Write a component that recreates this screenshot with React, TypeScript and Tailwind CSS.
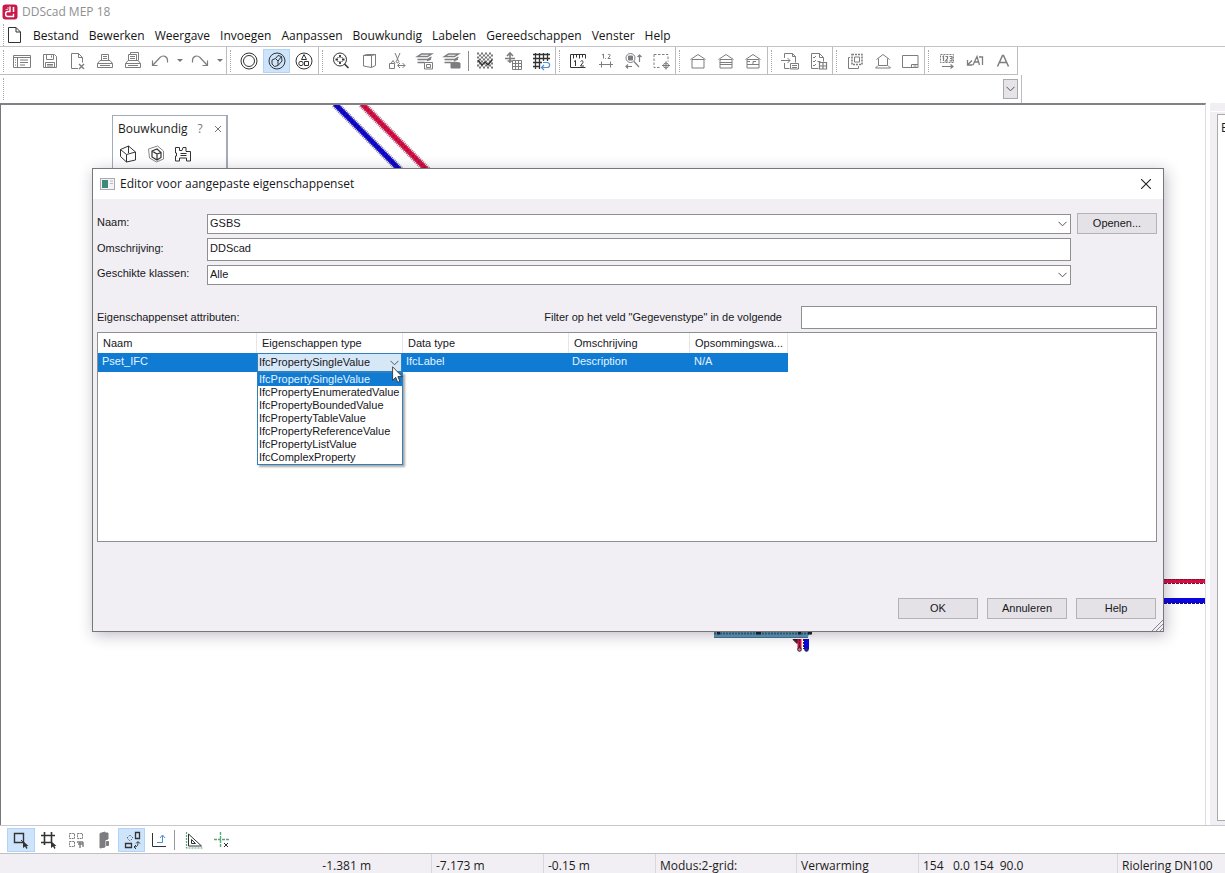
import type { ReactNode } from "react";

const UI = "font-['Open_Sans','Noto_Sans',sans-serif]";
const ARIAL = "font-['Liberation_Sans',Arial,sans-serif]";

function Glyph({ children }: { children: ReactNode }) {
  return (
    <svg width="20" height="20" viewBox="0 0 20 20" fill="none" stroke="currentColor" strokeWidth="1" aria-hidden="true" className="shrink-0">
      {children}
    </svg>
  );
}

function Chevron() {
  return (
    <svg width="9" height="6" viewBox="0 0 9 6" fill="none" stroke="#555" strokeWidth="1" aria-hidden="true">
      <path d="M.5 .8l4 4 4-4" />
    </svg>
  );
}

function Tool({ label, active, dark, children }: { label: string; active?: boolean; dark?: boolean; children: ReactNode }) {
  return (
    <button
      type="button"
      aria-label={label}
      className={`flex h-6 min-w-0 flex-1 items-center justify-center ${active ? "bg-[#cde4fb] outline outline-1 -outline-offset-1 outline-[#b3d5f5]" : ""} ${dark ? "text-[#333]" : "text-[#7d7d80]"}`}
    >
      <Glyph>{children}</Glyph>
    </button>
  );
}

function Caret({ label }: { label: string }) {
  return (
    <button type="button" aria-label={label} className="flex h-6 w-3 shrink-0 items-center justify-center text-[#777]">
      <svg width="6" height="3" viewBox="0 0 6 3" aria-hidden="true">
        <path d="M0 0h6l-3 3z" fill="currentColor" />
      </svg>
    </button>
  );
}

function Grip() {
  return <span className="mr-1 ml-[3px] h-[22px] w-0 shrink-0 border-l border-dotted border-[#a9a9ad]" />;
}

function Group({ className, children }: { className: string; children: ReactNode }) {
  return (
    <div role="group" className={`flex h-full shrink-0 items-center border-r border-b border-[#bdbcc0] ${className}`}>
      <Grip />
      {children}
    </div>
  );
}

const menus = ["Bestand", "Bewerken", "Weergave", "Invoegen", "Aanpassen", "Bouwkundig", "Labelen", "Gereedschappen", "Venster", "Help"];

const propertyTypes = [
  "IfcPropertySingleValue",
  "IfcPropertyEnumeratedValue",
  "IfcPropertyBoundedValue",
  "IfcPropertyTableValue",
  "IfcPropertyReferenceValue",
  "IfcPropertyListValue",
  "IfcComplexProperty",
];

function TitleBar() {
  return (
    <header className="flex h-6 items-center gap-1 pl-[2px] text-[12px] text-[#8f8f91]">
      <svg width="16" height="16" viewBox="0 0 16 16" aria-hidden="true">
        <rect x=".5" y=".5" width="15" height="15" rx="3" fill="#c9194b" />
        <path d="M8 2.500v5H5.500c-2.500 0-2.500 5 0 5h6V9.800" fill="none" stroke="#fff" strokeWidth="1.400" />
        <path d="M11.500 3v5" fill="none" stroke="#fff" strokeWidth="1.600" />
        <path d="M6 3v2.500H3.500" fill="none" stroke="#f3b5c5" strokeWidth="1" />
      </svg>
      <span>DDScad MEP 18</span>
    </header>
  );
}

function MenuBar() {
  return (
    <nav className="flex h-[23px] items-center border-b border-[#c4c3c7] text-[12px] text-[#151515]">
      <Grip />
      <svg width="13" height="16" viewBox="0 0 13 16" fill="none" stroke="#333" className="mr-3" aria-hidden="true">
        <path d="M.5 .5h7.500l4.500 4.500v10.500H.5zM8 .5V5h4.500" />
      </svg>
      <div className="flex gap-[10px] pt-[2px]">
        {menus.map((m) => (
          <button type="button" key={m}>{m}</button>
        ))}
      </div>
    </nav>
  );
}

const house = "M2.500 8.500L10 3.500l7.500 5M4 8.500h12v8.500H4z";

function Toolbar() {
  return (
    <div role="toolbar" aria-label="Werkbalk" className="flex h-7">
      <Group className="w-[227px]">
        <Tool label="Project">
          <path d="M1.500 4.500h17v12h-17zM1.500 6.500h17M5.500 6.500v10M8 9h8M8 11.500h8M8 14h5M3 9h1M3 11.500h1M3 14h1" />
        </Tool>
        <Tool label="Opslaan">
          <path d="M3.500 3.500h11l2 2v11h-13zM6.500 3.500v5h7v-5M11.500 4.500v2M5.500 16.500v-5h9v5M7 13.500h6M7 15h6" />
        </Tool>
        <Tool label="Sluiten">
          <path d="M11 17.500H4.500v-15h7l4 4v5M11.500 2.500v4h4" />
          <path d="M12 13l5 5M17 13l-5 5" strokeWidth="1.400" />
        </Tool>
        <Tool label="Afdrukken">
          <path d="M6.500 9.500v-6h7v6M5 9.500h10l2.500 3v4h-15v-4zM2.500 12.500h15M5 14.500h10M8 5.500h4M8 7.500h4" />
        </Tool>
        <Tool label="Afdrukvoorbeeld">
          <path d="M5.500 9.500v-6h8v6M7.500 3.500v-2h8v8M5 9.500h10l2.500 3v4h-15v-4zM2.500 12.500h15M5 14.500h10M7 5.500h5M7 7.500h5" />
        </Tool>
        <Tool label="Ongedaan maken">
          <path d="M2.500 14.500L10 6.500c3-3 7.500-1 7.500 3v2M2.500 9.500v5h5" strokeWidth="1.200" />
        </Tool>
        <Caret label="Meer ongedaan maken" />
        <Tool label="Opnieuw">
          <path d="M17.500 14.500L10 6.500c-3-3-7.500-1-7.500 3v2M17.500 9.500v5h-5" strokeWidth="1.200" />
        </Tool>
        <Caret label="Meer opnieuw" />
      </Group>
      <Group className="w-[92px]">
        <Tool label="Cirkel" dark>
          <circle cx="10" cy="10" r="8" />
          <circle cx="10" cy="10" r="5.500" />
        </Tool>
        <Tool label="Kubus" dark active>
          <circle cx="10" cy="10" r="8" />
          <path d="M5 9l3.500-1.500L11 10v4.500l-3.500 1L5 13zM8.500 7.500L11 4.500l3.500 1L15 10l-4 4.500M11 10l3.500-4.500" />
        </Tool>
        <Tool label="Vormen" dark>
          <circle cx="10" cy="10" r="8" />
          <path d="M10 3.500l2.500 5h-5zM10.500 10.500h4v4h-4z" />
          <circle cx="7" cy="12.500" r="2.200" />
        </Tool>
      </Group>
      <Group className="w-[237px]">
        <Tool label="Zoom" dark>
          <circle cx="9" cy="8.500" r="6.500" />
          <path d="M13.500 13l4 4" strokeWidth="1.600" />
          <path d="M9 4v2.500M9 10.500V13M4.500 8.500H7M11 8.500h2.500" strokeWidth="1.800" />
          <path d="M6.500 6l1 1M11.500 6l-1 1M6.500 11l1-1M11.500 11l-1-1" />
        </Tool>
        <Tool label="Aanzicht">
          <path d="M4.500 4.500h8v12l-8-1.500zM12.500 4.500l4-1v11l-4 2M4.500 4.500l3-1h9" />
        </Tool>
        <Tool label="Knippen">
          <path d="M8 2l3 7M13 2l-3 7M2.500 12.500h5v5h-5zM4 12.500l2-3 2 3M11 14.500h7M15.500 12l2.500 2.500-2.500 2.500M13 12l-2.500 2.500L13 17" />
          <circle cx="10.500" cy="10.500" r="1.300" />
        </Tool>
        <Tool label="Lagen kopieren">
          <path d="M2.500 5.500l4-2.500h10l-4 2.500zM2.500 8.500h10l4-2.500M2.500 11.500h7M12 9.500l4-1.500" strokeWidth="1.400" />
          <path d="M9.500 11.500h8v6.500h-8zM11.500 13.500h4v3h-4z" />
        </Tool>
        <Tool label="Lagen">
          <path d="M2.500 5.500l4-2.500h10l-4 2.500zM2.500 8.500h10l4-2.500M2.500 11.500h7M12 9.500l4-1.500" strokeWidth="1.400" />
          <path d="M9 12l3-1 6 1v5H9z" fill="currentColor" />
        </Tool>
        <span className="mx-[2px] h-5 w-0 shrink-0 border-l border-[#8d8d90]" />
        <Tool label="Patroon" dark>
          <path d="M2 2.500h16M2 6.500h16M2 10.500h16M2 14.500h16" strokeDasharray="2 2" strokeWidth="2" stroke="#777" />
          <path d="M2 4.500h16M2 8.500h16M2 12.500h16M2 16.500h16" strokeDasharray="2 2" strokeDashoffset="2" strokeWidth="2" stroke="#777" />
          <path d="M3 9l4 5 3-3 3 3 4-5" strokeWidth="1.300" />
        </Tool>
        <Tool label="Raster plaatsen">
          <path d="M9.500 9.500h9v9h-9zM12.500 9.500v9M15.500 9.500v9M9.500 12.500h9M9.500 15.500h9" />
          <path d="M2 7.500h10M7 3v9M4 5l3-3 3 3M4.500 10h5" strokeWidth="1.600" />
        </Tool>
        <Tool label="Raster" dark>
          <path d="M2 3.500h17M2 7.500h17M2 11.500h9M2 15.500h7M4.500 2v16M8.500 2v16M12.500 2v8M16.500 2v8" strokeWidth="1.300" />
          <path d="M11 16.500h5c3.500 0 3.500-5 0-5h-4M13 14l-2.500 2.500L13 19" stroke="#4b8fd8" strokeWidth="1.200" />
        </Tool>
      </Group>
      <Group className="w-[120px]">
        <Tool label="Liniaal" dark>
          <path d="M17.500 3.500h-15v13h15M5.500 3.500v4M8.500 3.500v3M11.500 3.500v4M14.500 3.500v3M17.500 3.500v4" />
          <path d="M6 10.500l1.500-1v5.500M12.500 10.500c1-1.500 3-.8 2.500 1l-2.500 3.500H16" />
        </Tool>
        <Tool label="Maat">
          <path d="M3 13.500h14M5.500 10.500v6M14.500 10.500v6M6 4l1.500-1v4.500M12 4c.8-1.500 2.500-.8 2 .8L12 7.500h2.500M9.500 7v.8" />
        </Tool>
        <Tool label="Maat zoeken">
          <circle cx="7.500" cy="7" r="4.500" />
          <path d="M5.500 5h4v4h-4z" fill="currentColor" />
          <path d="M11 10.500l5 5.500M16.500 4v7M14.500 6l2-2 2 2M3 15.500h6M5 13.500l-2 2 2 2" strokeWidth="1.200" />
        </Tool>
        <Tool label="Selectie verplaatsen">
          <path d="M3 3.500h14v7M3 3.500v13h7" strokeDasharray="2.500 1.500" />
          <path d="M11 14.500h8M15 10.500v8" strokeWidth="1.200" />
          <circle cx="15" cy="14.500" r="2.500" />
        </Tool>
      </Group>
      <Group className="w-[92px]">
        <Tool label="Gebouw"><path d={house} /></Tool>
        <Tool label="Verdieping"><path d={house} /><path d="M4 11.500h12M4 13.500h12" /></Tool>
        <Tool label="Ruimten"><path d={house} /><path d="M4 13.500h12M10 13.500v-3h3M4 10.500h3" /></Tool>
      </Group>
      <Group className="w-[65px]">
        <Tool label="Importeren">
          <path d="M4.500 7V2.500h8l3 3v6M4.500 12v5.500h5M12.500 2.500v3h3M1 9.500h9M7.500 7l2.500 2.500L7.500 12M10.500 12.500h8v5.500h-8zM12 14.500h5M12 16.500h5" />
        </Tool>
        <Tool label="Controlelijst">
          <path d="M3.500 2.500h8l4 4v4M3.500 2.500v15h7M11.500 2.500v4h4M5 6l1 1 2-2M5 10l1 1 2-2M5 14l1 1 2-2M9.500 10.500h3" />
          <path d="M11.500 11.500h7v6.500h-7zM15 11.500V18M11.500 15h7" strokeWidth="1.200" />
        </Tool>
      </Group>
      <Group className="w-[92px]">
        <Tool label="Kopie selectie">
          <path d="M7 3.500h10v10H7z" strokeDasharray="2 1" strokeWidth="1.600" />
          <path d="M9.500 6h5v5h-5zM5 6.500H3.500v11h10V15" />
        </Tool>
        <Tool label="Begane grond"><path d="M3.500 8.500L10 3.500l6.500 5M5.500 7.500v7h9v-7M5 14.500l-2.500 2.500h15L15 14.500" /></Tool>
        <Tool label="Tekenblad"><path d="M2.500 4.500h15.500v12H2.500zM11.500 13.500h6.500M11.500 13.500v3M13.500 15h3" /></Tool>
      </Group>
      <Group className="w-[93px]">
        <Tool label="Nummering">
          <path d="M3.500 3.500h13v8h-13z" strokeDasharray="2 1" />
          <path d="M5.500 6l1-.8V10M8.500 5.500h2v2l-2 2.500h2.500M12.500 5.500H15v4.300h-2.500M13 7.500h2M5 15.500h11M13.500 13.500l2.500 2-2.500 2" strokeWidth="1.200" />
        </Tool>
        <Tool label="Tekst met pijl">
          <path d="M2.500 9v5h5M2.500 14L7 9.500M8 14l4-8.500 2.500 8.500M9.500 11h4.500M14 6h3.500v8" strokeWidth="1.300" />
        </Tool>
        <Tool label="Tekst"><path d="M4.500 15.500l5-11h1l5 11M6.500 11.500h7" strokeWidth="1.500" /></Tool>
      </Group>
    </div>
  );
}

function CommandBar() {
  return (
    <div className="flex h-7 pr-[203px]">
      <div className="flex h-full flex-1 items-center border-r border-[#bdbcc0] pr-[3px]">
        <Grip />
        <input aria-label="Opdracht" className="h-5 min-w-0 flex-1 px-1 text-[12px] outline-none" />
        <button type="button" aria-label="Opdrachtenlijst" className="flex h-5 w-[15px] items-center justify-center border border-[#aaa9ad] bg-[#e6e4e8]">
          <Chevron />
        </button>
      </div>
    </div>
  );
}

function Palette() {
  return (
    <section className="absolute top-[10px] left-[111px] h-20 w-[116px] border-t border-r-2 border-l border-[#a3abb8] bg-white text-[#1c1c1c]">
      <div className="flex h-[26px] items-center pl-[5px]">
        <h2 className="flex-1 text-[12px]">Bouwkundig</h2>
        <button type="button" aria-label="Uitleg" className="w-[18px] text-[12px] text-[#777]">?</button>
        <button type="button" aria-label="Palet sluiten" className="flex w-[17px] justify-center">
          <svg width="6" height="6" viewBox="0 0 6 6" stroke="#777" aria-hidden="true"><path d="M0 0l6 6M6 0L0 6" /></svg>
        </button>
      </div>
      <div className="flex w-[84px] pl-[1px]">
        <Tool label="Ruimte" dark>
          <path d="M2.500 5.500l8-3.500 7 6v8l-9 2-6-5.500zM2.500 5.500l6 5 9-2.500M8.500 10.500v7.500M10.500 2v7" />
        </Tool>
        <Tool label="Volume" dark>
          <path d="M2.500 5l9-3 6 5v8l-7 3-7-4z" stroke="#888" />
          <path d="M6 7l5-2 4 3.500v5L11 16l-5-3zM6 7l5 3 4-1.500M11 10v6" strokeWidth="1.200" />
        </Tool>
        <Tool label="Plattegrond" dark>
          <path d="M2.500 3.500h4v3h2.500l1-3h3v4h4.500v9.500h-4v-3h-7v3h-4v-5h1v-3h-1zM7.500 9.500h6M7.500 11.500h6" />
        </Tool>
      </div>
    </section>
  );
}

function Drawing() {
  return (
    <>
      <svg width="100" height="66" viewBox="0 0 100 66" className="absolute top-0 left-[331px]" aria-hidden="true">
        <path d="M3 -1L68 65" stroke="#77759a" strokeWidth="8" strokeDasharray="1 1" />
        <path d="M3 -1L68 65" stroke="#1208d8" strokeWidth="5" />
        <path d="M3 -1L68 65" stroke="#0a0590" strokeWidth="2" strokeDasharray="2 2" />
        <path d="M30 -1L96 66" stroke="#a3678c" strokeWidth="8" strokeDasharray="1 1" />
        <path d="M30 -1L96 66" stroke="#da0f42" strokeWidth="5" />
        <path d="M30 -1L96 66" stroke="#a80d36" strokeWidth="2" strokeDasharray="2 2" />
      </svg>
      <svg width="45" height="28" viewBox="0 0 45 28" className="absolute top-[473px] right-0" aria-hidden="true">
        <path d="M0 3h45" stroke="#dd0c40" strokeWidth="4" />
        <path d="M0 1.500h45M0 5.500h45" stroke="#6d1535" strokeDasharray="3 1" />
        <path d="M0 22.500h45" stroke="#0b06e0" strokeWidth="5" />
        <path d="M0 25.500h45" stroke="#15106e" strokeDasharray="3 1" />
      </svg>
      <svg width="100" height="26" viewBox="0 0 100 26" className="absolute top-[522px] left-[713px]" aria-hidden="true">
        <path d="M0 0h97l-3 10H0z" fill="#5b9ab9" />
        <path d="M0 6.500h97" stroke="#3d5f72" strokeWidth="2" strokeDasharray="2 1" />
        <path d="M3 6h3M42 6h5M84 6h3M94 6h4" stroke="#17202a" strokeWidth="3" />
        <path d="M0 10.500h94" stroke="#3e778f" />
        <path d="M79 12.500h5l-1 4z" fill="#5b1530" stroke="#3a1525" />
        <path d="M85.500 12v10" stroke="#d80c3e" strokeWidth="4" />
        <path d="M92.500 12v10" stroke="#0a06d8" strokeWidth="5" />
        <path d="M85.500 12v10M89.500 12v10" stroke="#4d1532" strokeDasharray="2 1" />
        <circle cx="85.500" cy="22.500" r="1.800" fill="#b98a9b" stroke="#3a1525" />
        <circle cx="92.500" cy="22.500" r="1.800" fill="#2a259b" stroke="#15106e" />
      </svg>
    </>
  );
}

const field = "w-full rounded-none border border-[#8f8e93] bg-white text-[11px] text-[#17171c] outline-none";
const pushButton = "h-[21px] w-20 border border-[#b3b2b6] bg-[#e4e2e6] text-[11px]";

function Combo({ id, value }: { id: string; value: string }) {
  return (
    <div className="relative">
      <select id={id} defaultValue={value} className={`${field} block h-5 appearance-none pb-px pl-[2px]`}>
        <option>{value}</option>
      </select>
      <span className="pointer-events-none absolute inset-y-0 right-1 flex items-center"><Chevron /></span>
    </div>
  );
}

function AttributeTable() {
  return (
    <div className="mt-[3px] h-[210px] border border-[#8f8e93] bg-white">
      <table className="w-[690px] table-fixed border-separate border-spacing-0 text-left text-[11px] leading-[13px]">
        <colgroup>
          <col className="w-[159px]" />
          <col className="w-[146px]" />
          <col className="w-[166px]" />
          <col className="w-[121px]" />
          <col className="w-[98px]" />
        </colgroup>
        <thead>
          <tr className="h-5">
            {["Naam", "Eigenschappen type", "Data type", "Omschrijving", "Opsommingswa..."].map((h) => (
              <th key={h} className="truncate border-r border-[#e6e5e9] p-0 pt-px pl-[5px] font-normal">{h}</th>
            ))}
          </tr>
        </thead>
        <tbody>
          <tr className="h-[19px] bg-[#0f7bd3] text-[#e5f3ff]">
            <td className="p-0 pb-[3px] pl-1">Pset_IFC</td>
            <td className="relative p-0 text-[#17171c]">
              <select
                aria-label="Eigenschappen type"
                defaultValue={propertyTypes[0]}
                className="block h-[19px] w-[145px] appearance-none rounded-none border border-[#2f80bd] bg-[#d6e8f8] pl-px outline-none"
              >
                {propertyTypes.map((t) => <option key={t}>{t}</option>)}
              </select>
              <span className="pointer-events-none absolute top-[7px] right-1"><Chevron /></span>
              <ul role="listbox" aria-label="Eigenschappen typen" className="absolute top-[19px] left-0 z-10 w-[146px] border border-[#2f80bd] bg-white shadow-[2px_2px_2px_rgba(0,0,0,0.35)]">
                {propertyTypes.map((t, i) => (
                  <li key={t} role="option" aria-selected={i === 0} className={`h-[13px] pl-px whitespace-nowrap ${i === 0 ? "bg-[#0f7bd3] text-[#e5f3ff]" : ""}`}>
                    {t}
                  </li>
                ))}
              </ul>
              <svg width="12" height="18" viewBox="0 0 12 18" className="absolute top-[13px] left-[135px] z-20" aria-hidden="true">
                <path d="M.6 .8v13.500l3.100-3 2 5 2.200-.9-2-4.800h4.300z" fill="#fff" stroke="#333" strokeWidth=".9" />
              </svg>
            </td>
            <td className="p-0 pb-[3px] pl-[3px]">IfcLabel</td>
            <td className="p-0 pb-[3px] pl-[3px]">Description</td>
            <td className="p-0 pb-[3px] pl-1">N/A</td>
          </tr>
        </tbody>
      </table>
    </div>
  );
}

function PropertyDialog() {
  return (
    <section
      role="dialog"
      aria-labelledby="dialog-title"
      className={`absolute top-[63px] right-[41px] left-[91px] z-10 border border-[#77767b] bg-[#f1eff3] text-[#17171c] shadow-[2px_3px_14px_rgba(40,30,60,0.3)] ${ARIAL}`}
    >
      <div className={`flex h-[30px] items-center bg-white pr-3 pl-[7px] ${UI}`}>
        <svg width="15" height="12" viewBox="0 0 15 12" aria-hidden="true">
          <rect x=".5" y=".5" width="14" height="11" fill="#f4f4f6" stroke="#a9a9b2" />
          <path d="M2 2h6v8H2z" fill="#3d8a78" />
          <path d="M10 3h3M10 5.500h3" stroke="#b9b9c4" />
        </svg>
        <h1 id="dialog-title" className="ml-[5px] flex-1 text-[12px]">Editor voor aangepaste eigenschappenset</h1>
        <button type="button" aria-label="Sluiten">
          <svg width="10" height="10" viewBox="0 0 10 10" stroke="#222" strokeWidth="1.100" aria-hidden="true"><path d="M0 0l10 10M10 0L0 10" /></svg>
        </button>
      </div>
      <form className="pt-[14px] pr-[6px] pb-3 pl-1 text-[11px]" onSubmit={(e) => e.preventDefault()}>
        <div className="grid grid-cols-[110px_1fr_80px] items-center gap-y-1">
          <label htmlFor="naam" className="pb-[3px]">Naam:</label>
          <div className="mr-[6px]"><Combo id="naam" value="GSBS" /></div>
          <button type="button" className={pushButton}>Openen...</button>
          <label htmlFor="omschrijving" className="pb-[3px]">Omschrijving:</label>
          <div className="mr-[6px]"><input id="omschrijving" defaultValue="DDScad" className={`${field} block h-[23px] pb-1 pl-[2px]`} /></div>
          <span />
          <label htmlFor="klassen" className="pb-[3px]">Geschikte klassen:</label>
          <div className="mr-[6px]"><Combo id="klassen" value="Alle" /></div>
        </div>
        <div className="mt-[21px] flex items-center">
          <span className="flex-1">Eigenschappenset attributen:</span>
          <label htmlFor="filter" className="mr-[19px]">Filter op het veld "Gegevenstype" in de volgende</label>
          <div className="w-[356px]"><input id="filter" className={`${field} block h-[23px] px-1`} /></div>
        </div>
        <AttributeTable />
        <div className="mt-14 flex justify-end gap-[9px] pr-px">
          <button type="submit" className={pushButton}>OK</button>
          <button type="button" className={pushButton}>Annuleren</button>
          <button type="button" className={pushButton}>Help</button>
        </div>
      </form>
      <svg width="11" height="11" viewBox="0 0 11 11" className="absolute right-0 bottom-0" stroke="#88878c" aria-hidden="true">
        <path d="M0 11L11 0M4 11l7-7M8 11l3-3" />
      </svg>
    </section>
  );
}

function BottomTools() {
  return (
    <div role="toolbar" aria-label="Selectie" className="flex h-7 items-center border-b border-[#c0bfc3] pl-[7px]">
      <div className="flex w-[166px]">
        <Tool label="Selecteren" dark active>
          <path d="M3.500 3.500h9v9h-9z" strokeWidth="1.400" />
          <path d="M12 11v7l2-1.500 1.500 2.500 1-1-1-2h2z" fill="currentColor" stroke="none" />
          <path d="M10 10l3 3" />
        </Tool>
        <Tool label="Rasterselectie" dark>
          <path d="M5.500 2v13M12.500 2v10M2 5.500h14M2 12.500h11" strokeWidth="1.600" />
          <path d="M12 11v7l2-1.500 1.500 2.500 1-1-1-2h2z" fill="currentColor" stroke="none" />
        </Tool>
        <Tool label="Meerdere selecteren">
          <path d="M3.500 3.500h5v5h-5zM11.500 3.500h5v5h-5zM3.500 11.500h5v5h-5z" strokeDasharray="2 .7" />
          <path d="M11 12h6M12 14h5M14 12v6M17 12v5" strokeWidth="1.400" />
        </Tool>
        <Tool label="Deur">
          <path d="M6 3.500l5-1.500v15l-5 1zM11 3h3v6l-3 1z" fill="currentColor" />
          <path d="M12.500 11.500h2v4h-2z" fill="currentColor" />
        </Tool>
        <Tool label="Verplaatsen" dark active>
          <path d="M13.500 2.500h4v6h-4zM3.500 13.500h6v4h-6z" strokeWidth="1.300" />
          <path d="M5 8l3-3 3 3-3 3z" strokeDasharray="1 1.500" />
          <path d="M12 17c3 0 4-1 4-5M14 13.500l2-2 2 2M14 15l-2 2 2 2" />
        </Tool>
        <Tool label="Oorsprong" dark>
          <path d="M3.500 3v13.500H17" />
          <path d="M8 12.500h5.500v-7M11 8l2.500-3L16 8" stroke="#4b8fd8" />
        </Tool>
      </div>
      <span className="mr-[5px] ml-px h-5 border-l border-[#99999d]" />
      <div className="flex w-[56px]">
        <Tool label="Driehoek" dark>
          <path d="M4.500 4v12h13zM7.500 9.500v4h4z" />
          <path d="M2.500 2v16h16" stroke="#57a878" strokeDasharray="2 1" strokeWidth="1.200" />
        </Tool>
        <Tool label="Snappunt" dark>
          <path d="M8.500 2v15M2 9.500h15" stroke="#57a878" strokeDasharray="3 1" strokeWidth="1.400" />
          <path d="M12 13l4 4M16 13l-4 4" />
        </Tool>
      </div>
    </div>
  );
}

function StatusBar() {
  const cell = "border-l border-[#d9d7dc] pl-1 pt-1";
  return (
    <footer className="flex h-[19px] bg-[#f1eff3] text-[12px] leading-[16px] whitespace-pre text-[#1c1c1c]">
      <span className="w-[431px] pt-1 pr-[60px] text-right">-1.381 m</span>
      <span className={`${cell} w-[112px]`}>-7.173 m</span>
      <span className={`${cell} w-[112px]`}>-0.15 m</span>
      <span className={`${cell} w-[141px]`}>Modus:2-grid:</span>
      <span className={`${cell} w-[122px]`}>Verwarming</span>
      <span className={`${cell} flex-1`}>154   0.0 154  90.0</span>
      <span className={`${cell} w-[108px]`}>Riolering DN100</span>
    </footer>
  );
}

export default function App() {
  return (
    <div className={`flex min-h-screen flex-col overflow-hidden bg-white ${UI}`}>
      <TitleBar />
      <MenuBar />
      <Toolbar />
      <CommandBar />
      <main className="flex flex-1 border-b border-[#c9c8cc]">
        <div className="relative flex-1 border-t-2 border-r border-l border-t-[#828186] border-r-[#dddce0] border-l-[#77767b]">
          <Drawing />
          <Palette />
          <PropertyDialog />
        </div>
        <aside className="ml-1 flex w-[15px] flex-col overflow-hidden bg-[#f1eff3]">
          <div className="mb-[2px] h-[9px] border-b border-white" />
          <div className="mb-1 ml-[7px] flex-1 border-t border-b border-l border-[#aaa9ae] bg-white pt-1 pl-[3px] text-[12px] text-[#1c1c1c]">E</div>
        </aside>
      </main>
      <BottomTools />
      <StatusBar />
    </div>
  );
}
